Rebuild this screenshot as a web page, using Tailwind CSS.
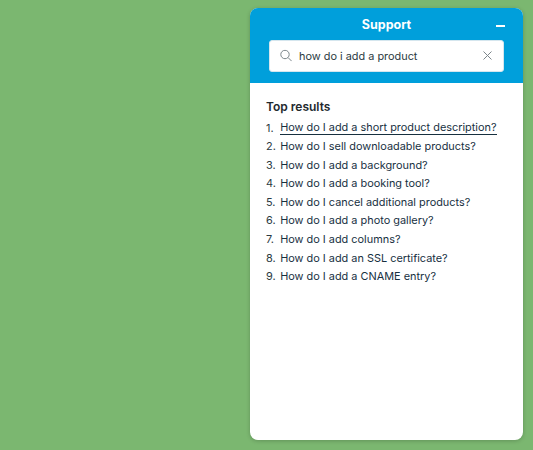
<!DOCTYPE html>
<html><head><meta charset="utf-8"><script src="https://cdn.jsdelivr.net/npm/@tailwindcss/browser@4"></script></head>
<body class="m-0 bg-[#7bb770]">
<div class="flex h-[450px] w-[533px] items-start justify-end overflow-hidden pr-[10px] pt-[8px] font-['Inter',sans-serif]">
  <div class="flex h-[432px] w-[273px] flex-col overflow-hidden rounded-[8px] bg-white shadow-[0_1px_4px_rgba(0,0,0,0.2)]">
    <header class="h-[75px] shrink-0 bg-[#009fdb] pt-[9px]">
      <div class="relative h-[16px] text-center text-[12.5px] leading-[16px] font-bold text-white">Support
        <span class="absolute left-[246px] top-[8px] h-[1.5px] w-[9px] bg-white"></span>
      </div>
      <div class="mx-auto mt-[7px] flex h-[32px] w-[235px] items-center rounded-[3px] border border-[#d5e6ee] bg-white pl-[10px] pr-[11px]">
        <svg class="mr-[7px] shrink-0 -translate-y-[0.5px]" width="12" height="12" viewBox="0 0 12 12" fill="none" stroke="#7c868b" stroke-width="1"><circle cx="5" cy="5" r="4.2"/><path d="M8 8L11.7 11.7"/></svg>
        <span class="flex-1 text-[10.9px] text-[#2b3a42]">how do i add a product</span>
        <svg class="-translate-y-[1px]" width="9" height="9" viewBox="0 0 9 9" fill="none" stroke="#7c868b" stroke-width="1"><path d="M.5.5l8 8M8.5.5l-8 8"/></svg>
      </div>
    </header>
    <main class="pl-[16px] pr-[16px] pt-[17px]">
      <h2 class="text-[12px] leading-[14px] font-semibold text-[#22292e]">Top results</h2>
      <ol class="mt-[4.7px] text-[10.9px] leading-[18.55px] text-[#17303f]">
        <li class="flex"><span class="w-[14.2px] text-[#2b3a42]">1.</span><a class="h-[16px] border-b border-[#17303f] leading-[17px]">How do I add a short product description?</a></li>
        <li class="flex"><span class="w-[14.2px] text-[#2b3a42]">2.</span><a>How do I sell downloadable products?</a></li>
        <li class="flex"><span class="w-[14.2px] text-[#2b3a42]">3.</span><a>How do I add a background?</a></li>
        <li class="flex"><span class="w-[14.2px] text-[#2b3a42]">4.</span><a>How do I add a booking tool?</a></li>
        <li class="flex"><span class="w-[14.2px] text-[#2b3a42]">5.</span><a>How do I cancel additional products?</a></li>
        <li class="flex"><span class="w-[14.2px] text-[#2b3a42]">6.</span><a>How do I add a photo gallery?</a></li>
        <li class="flex"><span class="w-[14.2px] text-[#2b3a42]">7.</span><a>How do I add columns?</a></li>
        <li class="flex"><span class="w-[14.2px] text-[#2b3a42]">8.</span><a>How do I add an SSL certificate?</a></li>
        <li class="flex"><span class="w-[14.2px] text-[#2b3a42]">9.</span><a>How do I add a CNAME entry?</a></li>
      </ol>
    </main>
  </div>
</div>
</body></html>
